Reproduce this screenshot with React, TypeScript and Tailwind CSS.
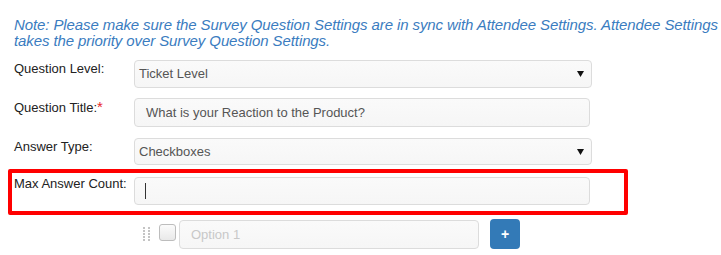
import React from "react";

const font = { fontFamily: '"Liberation Sans", Arial, sans-serif' };

function Arrow() {
  return (
    <svg width="7" height="6" viewBox="0 0 7 6" className="absolute right-[7px] top-1/2 -translate-y-1/2">
      <path d="M0 0 H7 L3.5 6 Z" fill="#111" />
    </svg>
  );
}

function SelectBox({ value, h }: { value: string; h: string }) {
  return (
    <div
      className={`relative w-[458px] ${h} rounded-[4px] border border-[#dcdcdc] bg-gradient-to-b from-[#fafafa] to-[#f6f6f6] flex items-center pl-[4px] text-[13px] text-[#555]`}
    >
      {value}
      <Arrow />
    </div>
  );
}

export default function App() {
  return (
    <div className="w-[721px] h-[255px] bg-white relative overflow-hidden" style={font}>
      <div className="pt-[17px] pl-[14px] text-[15px] leading-[16px] italic text-[#3a7cc0] whitespace-nowrap tracking-[-0.1px]">
        Note: Please make sure the Survey Question Settings are in sync with Attendee Settings. Attendee Settings
        <br />
        takes the priority over Survey Question Settings.
      </div>

      {/* Question Level */}
      <div className="flex mt-[11px] pl-[14px]">
        <div className="w-[120px] text-[13px] leading-[18px] text-[#222]">Question Level:</div>
        <SelectBox value="Ticket Level" h="h-[28px]" />
      </div>

      {/* Question Title */}
      <div className="flex mt-[10px] pl-[14px]">
        <div className="w-[120px] text-[13px] leading-[18px] text-[#222]">
          Question Title:<span className="text-[#e8262b] text-[15px]">*</span>
        </div>
        <div className="w-[456px] h-[29px] rounded-[4px] border border-[#dcdcdc] bg-gradient-to-b from-[#fafafa] to-[#f6f6f6] flex items-center pl-[11px] text-[13px] text-[#555]">
          What is your Reaction to the Product?
        </div>
      </div>

      {/* Answer Type */}
      <div className="flex mt-[11px] pl-[14px]">
        <div className="w-[120px] text-[13px] leading-[18px] text-[#222]">Answer Type:</div>
        <SelectBox value="Checkboxes" h="h-[27px]" />
      </div>

      {/* Max Answer Count with red highlight */}
      <div className="ml-[8px] mt-[4px] w-[620px] border-[4px] border-[#ff0000] rounded-[2px] pl-[2px] pt-[4px] pb-[6px]">
        <div className="flex">
          <div className="w-[120px] -mt-[2px] text-[13px] leading-[18px] text-[#222]">Max Answer Count:</div>
          <div className="w-[456px] h-[28px] rounded-[4px] border border-[#dcdcdc] bg-gradient-to-b from-[#fafafa] to-[#f6f6f6] flex items-center pl-[10px]">
            <div className="w-[1px] h-[16px] bg-[#333]" />
          </div>
        </div>
      </div>

      {/* Option row */}
      <div className="flex items-center mt-[2px] pl-[143px]">
        <svg width="8" height="16" viewBox="0 0 8 16" className="mt-[2px]">
          {[0, 1, 2, 3, 4].map((r) => (
            <g key={r}>
              <rect x="0" y={r * 3 + 1} width="2" height="2" fill="#c4c4c4" />
              <rect x="5" y={r * 3 + 1} width="2" height="2" fill="#c4c4c4" />
            </g>
          ))}
        </svg>
        <div className="ml-[8px] w-[17px] h-[17px] rounded-[3px] border border-[#bdbdbd] bg-gradient-to-b from-[#fbfbfb] to-[#e9e9e9] mt-[-2px]" />
        <div className="ml-[3px] w-[300px] h-[29px] mt-[3px] rounded-[4px] border border-[#dcdcdc] bg-gradient-to-b from-[#fafafa] to-[#f6f6f6] flex items-center pl-[11px] text-[13px] text-[#c8c8c8]">
          Option 1
        </div>
        <div className="ml-[11px] mt-[1px] w-[30px] h-[30px] rounded-[4px] bg-[#337ab7] flex items-center justify-center text-white text-[14px] font-bold leading-none">
          +
        </div>
      </div>
    </div>
  );
}
